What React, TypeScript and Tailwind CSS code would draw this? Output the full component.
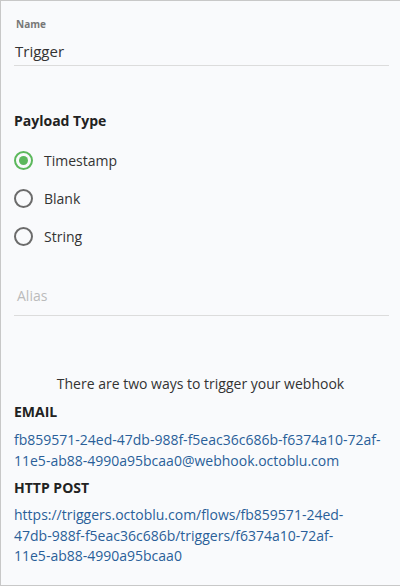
import React from "react";

function Radio({ checked, label }: { checked?: boolean; label: string }) {
  return (
    <div className="flex items-center h-[19px]">
      <span
        className={
          "w-[19px] h-[19px] rounded-full border-2 flex items-center justify-center shrink-0 " +
          (checked ? "border-[#5cb85c]" : "border-[#6b6b6b]")
        }
      >
        {checked && <span className="w-[9px] h-[9px] rounded-full bg-[#5cb85c]" />}
      </span>
      <span className="ml-[11px] text-[14px] text-[#333]">{label}</span>
    </div>
  );
}

export default function App() {
  return (
    <div
      className="w-[400px] h-[586px] bg-[#f9fafc] border-t border-l border-b border-[#c8c8c8] overflow-hidden"
      style={{ fontFamily: '"Open Sans", "Noto Sans", sans-serif' }}
    >
      <div className="px-[13px]">
        <div className="pt-[16px] pl-[2px] text-[10px] font-bold text-[#777] leading-[14px]">Name</div>
        <div className="mt-[10px] pl-[1px] text-[15px] text-[#333] leading-[20px]">Trigger</div>
        <div className="mt-[4px] w-[375px] h-px bg-[#dcdcdc]" />

        <div className="mt-[45px] text-[14px] font-bold text-[#222] leading-[20px]">Payload Type</div>

        <div className="mt-[20px] flex flex-col gap-[19px]">
          <Radio checked label="Timestamp" />
          <Radio label="Blank" />
          <Radio label="String" />
        </div>

        <div className="mt-[40px] pl-[3px] text-[14px] text-[#bbb] leading-[20px]">Alias</div>
        <div className="mt-[9px] w-[375px] h-px bg-[#dcdcdc]" />

        <div className="mt-[58px] text-center text-[14px] text-[#333] leading-[20px]">
          There are two ways to trigger your webhook
        </div>
        <div className="mt-[8px] text-[14px] font-bold text-[#222] leading-[20px]">EMAIL</div>
        <div className="mt-[8px] text-[14px] text-[#2a5f99] leading-[20.5px]">
          <div className="whitespace-nowrap">fb859571-24ed-47db-988f-f5eac36c686b-f6374a10-72af-</div>
          <div className="whitespace-nowrap">11e5-ab88-4990a95bcaa0@webhook.octoblu.com</div>
        </div>
        <div className="mt-[7px] text-[14px] font-bold text-[#222] leading-[20px]">HTTP POST</div>
        <div className="mt-[7px] text-[14px] text-[#2a5f99] leading-[20.5px]">
          <div className="whitespace-nowrap">https://triggers.octoblu.com/flows/fb859571-24ed-</div>
          <div className="whitespace-nowrap">47db-988f-f5eac36c686b/triggers/f6374a10-72af-</div>
          <div className="whitespace-nowrap">11e5-ab88-4990a95bcaa0</div>
        </div>
      </div>
    </div>
  );
}
